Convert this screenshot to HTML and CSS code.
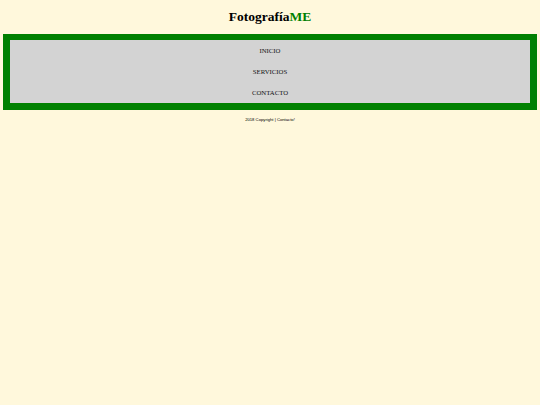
FILE: index.html
```html
<!DOCTYPE html>
<html lang="es">
<head>
<meta charset="utf-8">
<title>FotografíaME</title>
<link rel="stylesheet" href="styles.css">
</head>
<body>
<header class="site-header">
  <h1 class="brand">Fotografía<span class="brand-accent">ME</span></h1>
</header>
<nav class="main-nav">
  <ul class="nav-list">
    <li class="nav-item"><a class="nav-link" href="#">INICIO</a></li>
    <li class="nav-item"><a class="nav-link" href="#">SERVICIOS</a></li>
    <li class="nav-item"><a class="nav-link" href="#">CONTACTO</a></li>
  </ul>
</nav>
<footer class="site-footer">
  <p class="footer-text">2018 Copyright | Contacto!</p>
</footer>
</body>
</html>
```

FILE: styles.css
```css
html, body {
  margin: 0;
  padding: 0;
  background: #fff8dc;
}

body {
  font-family: "Liberation Serif", "Times New Roman", serif;
  color: #000;
}

.site-header {
  padding-top: 9px;
}

.brand {
  margin: 0 0 9.5px 0;
  font-size: 13.5px;
  line-height: 15.5px;
  font-weight: bold;
  text-align: center;
}

.brand-accent {
  color: #008000;
}

.main-nav {
  margin: 0 3px;
  border-style: solid;
  border-color: #008000;
  border-width: 6px 7px 7px 7px;
  background: #d3d3d3;
}

.nav-list {
  list-style: none;
  margin: 0;
  padding: 0;
}

.nav-item {
  height: 21px;
  box-sizing: border-box;
  padding-top: 1px;
  line-height: 20px;
  text-align: center;
  font-size: 6.75px;
}

.nav-link {
  color: #111;
  text-decoration: none;
}

.site-footer {
  text-align: center;
}

.footer-text {
  margin: 6.5px 0 0 0;
  font-family: "Liberation Sans", Arial, sans-serif;
  font-size: 4.2px;
  line-height: 5px;
}
```
